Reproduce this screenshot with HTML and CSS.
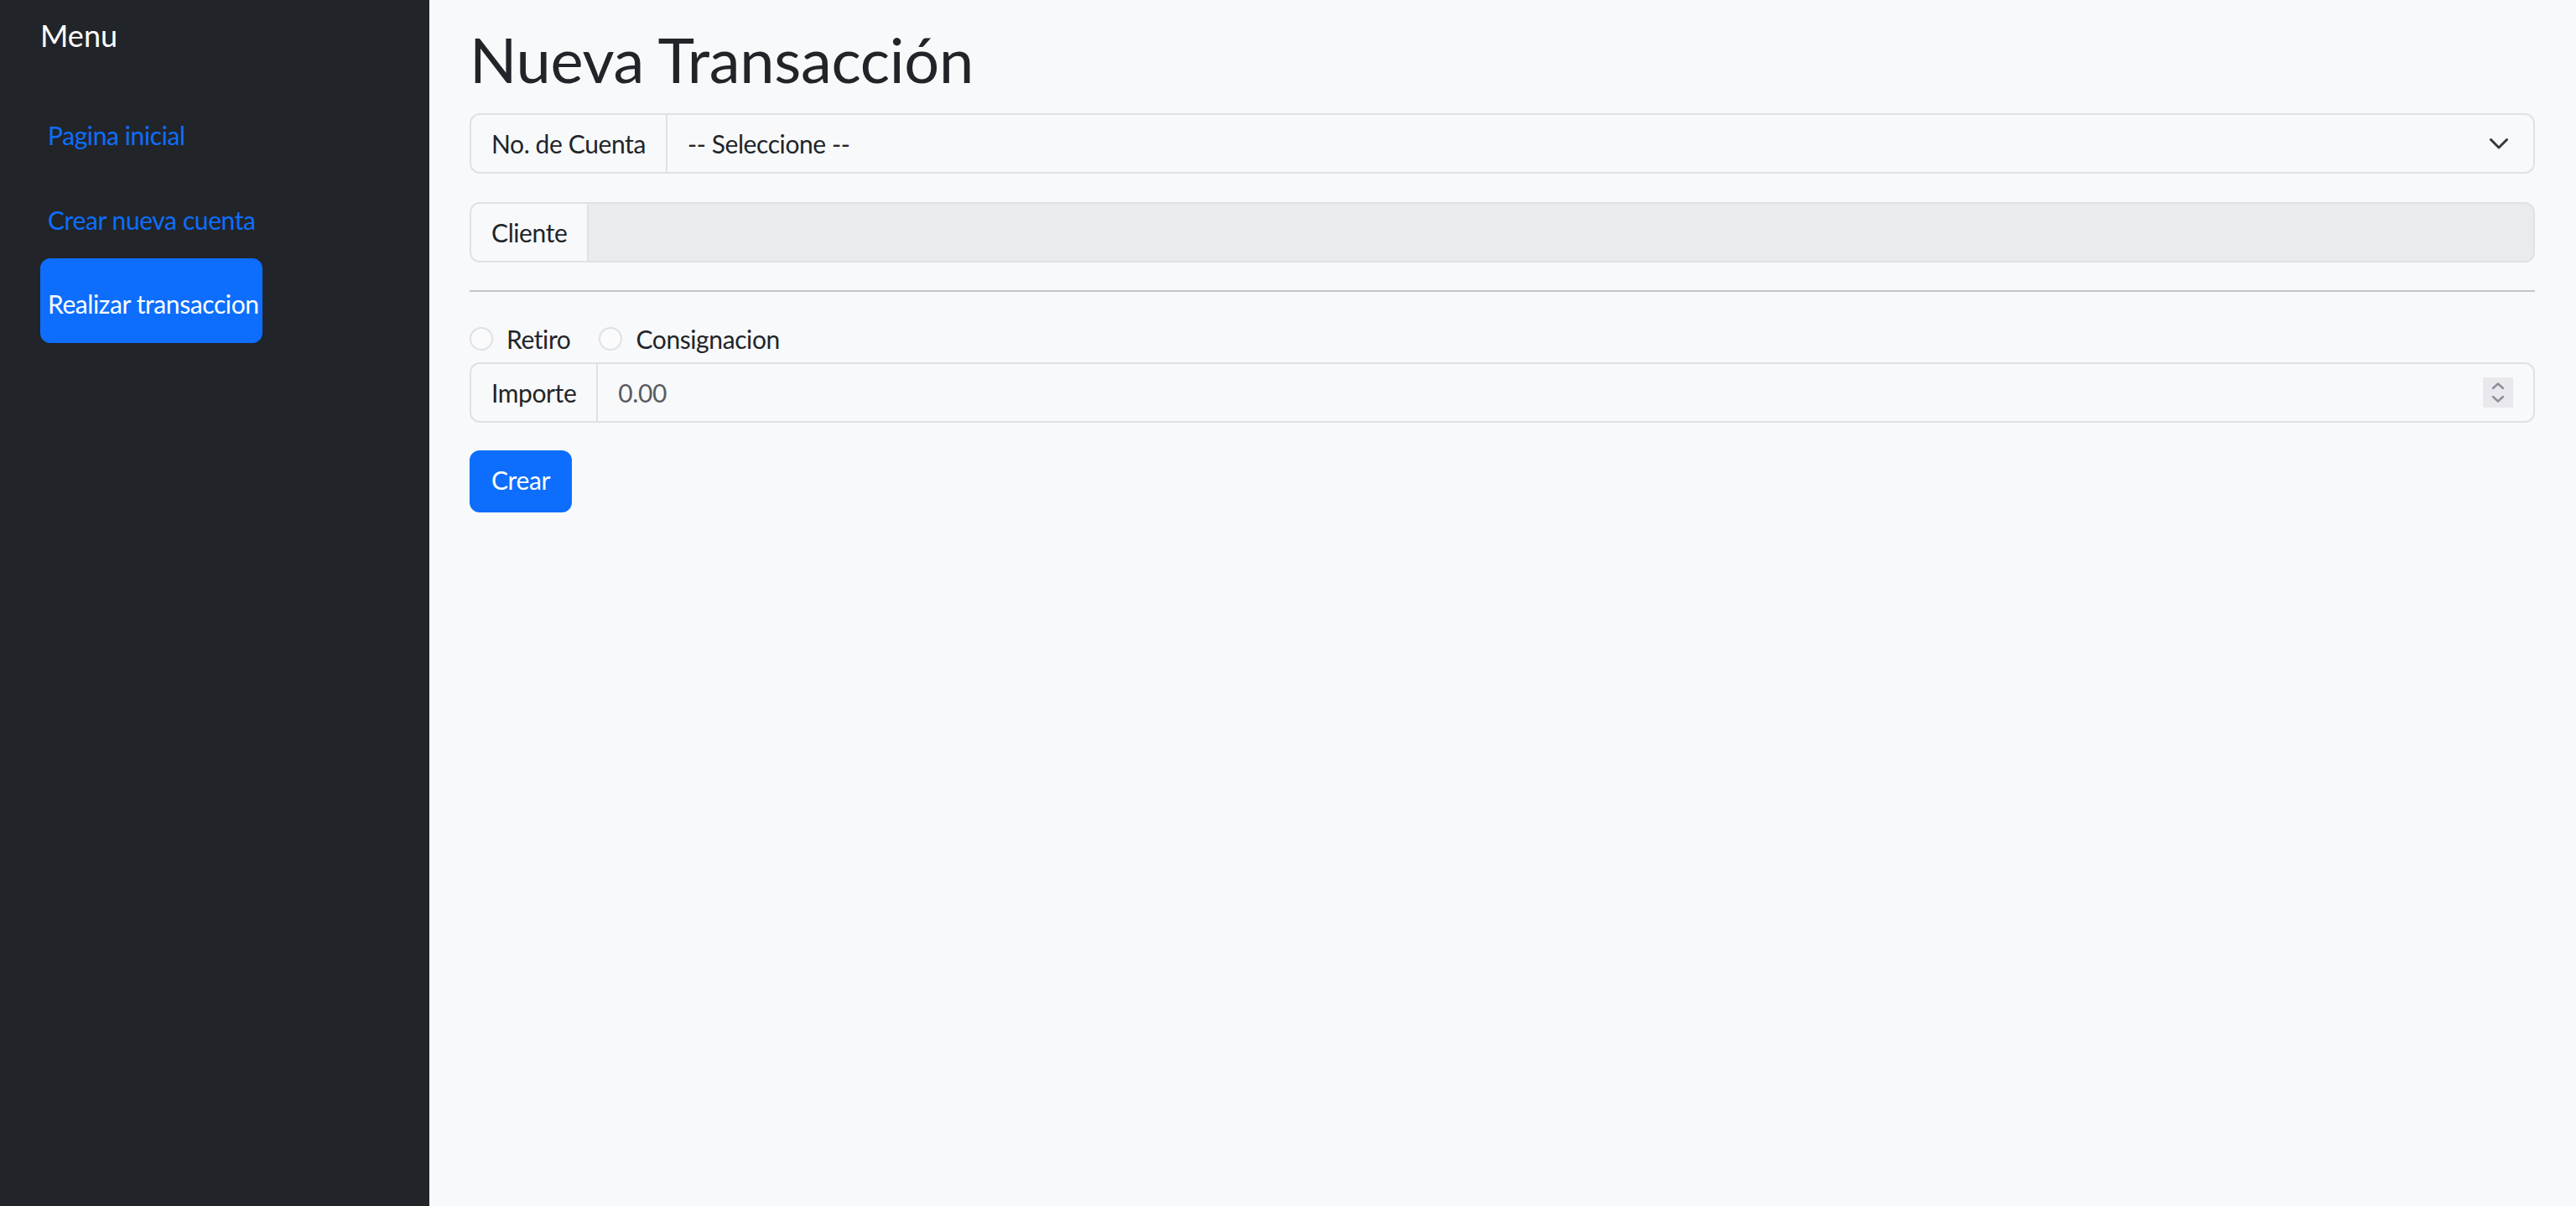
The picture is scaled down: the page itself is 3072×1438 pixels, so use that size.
FILE: index.html
```html
<!DOCTYPE html>
<html lang="es">
<head>
<meta charset="utf-8">
<title>Nueva Transacción</title>
<link rel="stylesheet" href="styles.css">
</head>
<body>
<div class="layout">
  <aside class="sidebar">
    <div class="brand">Menu</div>
    <nav class="nav">
      <a class="nav-link" href="#">Pagina inicial</a>
      <a class="nav-link" href="#">Crear nueva cuenta</a>
      <a class="nav-link active" href="#">Realizar transaccion</a>
    </nav>
  </aside>
  <main class="main">
    <h1 class="title">Nueva Transacción</h1>
    <div class="input-group gap-after">
      <span class="group-text">No. de Cuenta</span>
      <div class="field select">
        <span class="value">-- Seleccione --</span>
        <svg class="chevron" width="22" height="13" viewBox="0 0 22 13"><polyline points="1.5,1.5 11,11 20.5,1.5" fill="none" stroke="#343a40" stroke-width="3" stroke-linecap="round" stroke-linejoin="round"/></svg>
      </div>
    </div>
    <div class="input-group">
      <span class="group-text">Cliente</span>
      <div class="field disabled"></div>
    </div>
    <hr class="rule">
    <div class="radios">
      <label class="radio"><span class="circle"></span><span>Retiro</span></label>
      <label class="radio"><span class="circle"></span><span>Consignacion</span></label>
    </div>
    <div class="input-group gap-after">
      <span class="group-text">Importe</span>
      <div class="field number">
        <span class="placeholder">0.00</span>
        <span class="spinner">
          <svg width="36" height="36" viewBox="0 0 36 36"><polyline points="12,13 18,7.5 24,13" fill="none" stroke="#8f8f9d" stroke-width="2.5" stroke-linecap="round" stroke-linejoin="round"/><polyline points="12,23 18,28.5 24,23" fill="none" stroke="#8f8f9d" stroke-width="2.5" stroke-linecap="round" stroke-linejoin="round"/></svg>
        </span>
      </div>
    </div>
    <button class="btn" type="button">Crear</button>
  </main>
</div>
</body>
</html>
```
FILE: styles.css
```css
* { box-sizing: border-box; }
html, body { margin: 0; padding: 0; }
body {
  font-family: "Lato", "Noto Sans", sans-serif;
  color: #212529;
  background: #f8f9fa;
  font-size: 30px;
  letter-spacing: -0.4px;
}
.layout {
  display: flex;
  min-height: 1438px;
}
.sidebar {
  flex: 0 0 512px;
  background: #212529;
  padding: 18px 0 0 48px;
}
.brand {
  color: #ffffff;
  font-size: 36px;
  line-height: 48px;
  letter-spacing: 0;
}
.nav {
  display: flex;
  flex-direction: column;
  align-items: flex-start;
  margin-top: 41px;
}
.nav-link {
  display: block;
  height: 100.5px;
  width: 265px;
  padding: 30px 0 0 9px;
  line-height: 48px;
  font-size: 30px;
  color: #0d6efd;
  text-decoration: none;
  white-space: nowrap;
  overflow: hidden;
  border-radius: 12px;
}
.nav-link.active {
  background: #0d6efd;
  color: #ffffff;
}
.main {
  flex: 1;
  padding: 23px 49px 0 48px;
}
.title {
  margin: 0 0 16px;
  font-size: 74px;
  font-weight: 400;
  line-height: 96px;
  letter-spacing: -0.3px;
}
.input-group {
  display: flex;
  height: 72px;
}
.gap-after { margin-bottom: 34px; }
.group-text {
  display: flex;
  align-items: center;
  padding: 0 24px;
  border: 2px solid #dee2e6;
  border-radius: 12px 0 0 12px;
  background: #f8f9fa;
  white-space: nowrap;
  line-height: 48px;
}
.field {
  flex: 1;
  display: flex;
  align-items: center;
  justify-content: space-between;
  border: 2px solid #dee2e6;
  border-left: none;
  border-radius: 0 12px 12px 0;
  background: #f8f9fa;
  padding: 0 24px;
  line-height: 48px;
}
.select { padding-right: 30px; }
.disabled { background: #e9ecef; }
.placeholder { color: #595c5f; }
.number { padding-right: 24px; }
.spinner {
  display: block;
  width: 36px;
  height: 36px;
  background: #e9e9ed;
}
.spinner svg { display: block; }
.chevron { display: block; }
.rule {
  margin: 33px 0 32px;
  border: 0;
  border-top: 2px solid #c4c5c7;
  height: 0;
}
.radios {
  display: flex;
  align-items: center;
  gap: 34px;
  height: 48px;
  margin-bottom: 4px;
}
.radio {
  display: flex;
  align-items: center;
  gap: 16px;
  line-height: 48px;
}
.circle {
  display: block;
  width: 28px;
  height: 28px;
  border: 2px solid #dee2e6;
  border-radius: 50%;
  background: #fbfbfc;
}
.btn {
  display: block;
  height: 74px;
  padding: 0 26px 4px;
  margin-top: -1px;
  border: 0;
  border-radius: 12px;
  background: #0d6efd;
  color: #ffffff;
  font-family: inherit;
  font-size: 30px;
  letter-spacing: -0.4px;
  line-height: 48px;
}
```
